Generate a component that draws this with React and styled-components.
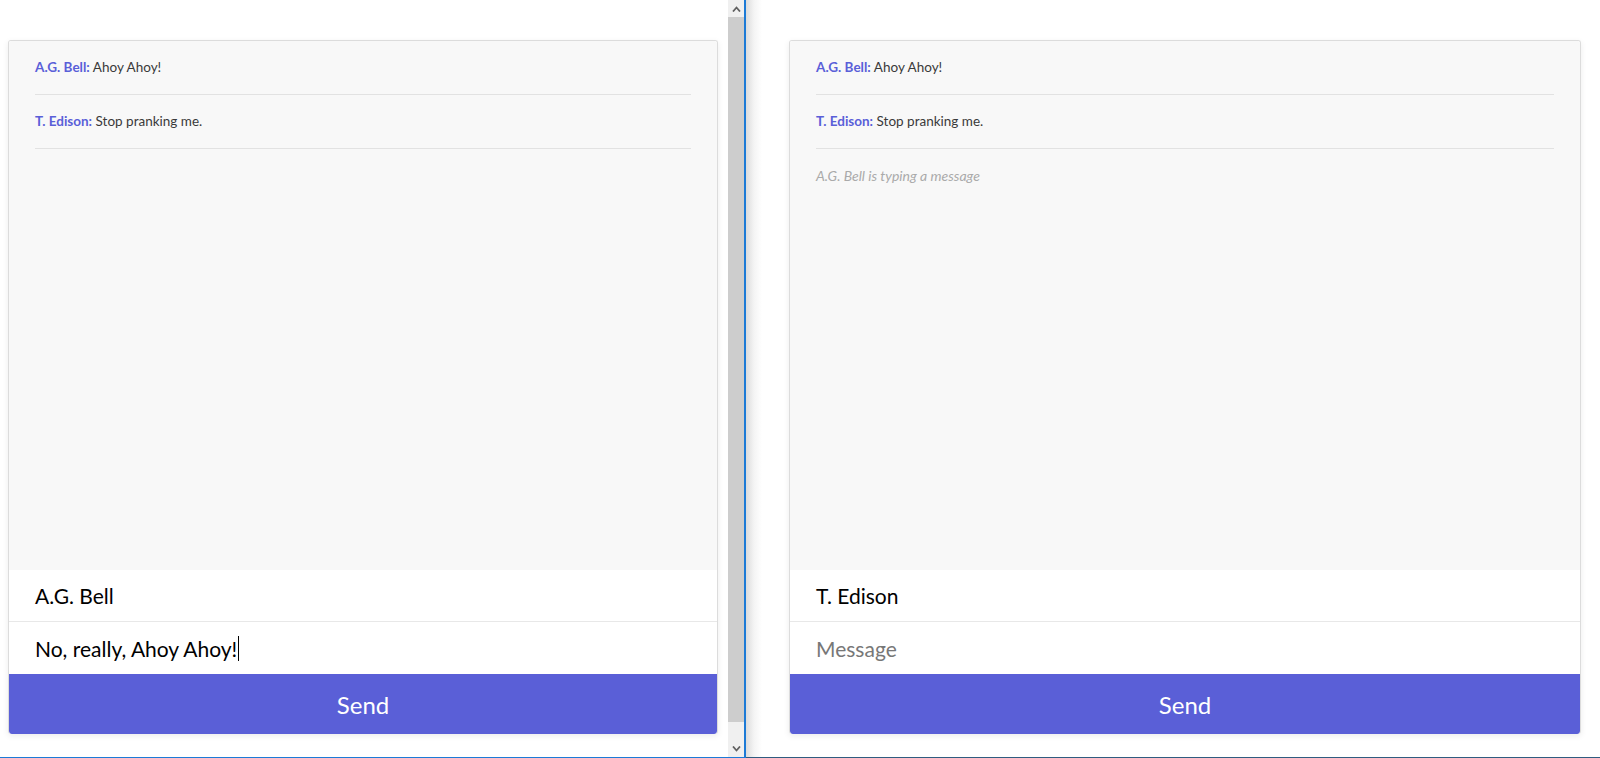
import React from 'react';
import styled, { createGlobalStyle } from 'styled-components';

const GlobalStyle = createGlobalStyle`
  html, body {
    margin: 0;
    padding: 0;
    background: #fff;
    overflow: hidden;
  }
  body {
    font-family: Lato, "Noto Sans", sans-serif;
  }
`;

const Screen = styled.div`
  display: flex;
  width: 1600px;
  height: 758px;
  overflow: hidden;
`;

const Window = styled.div`
  display: flex;
  height: 757px;
  border-bottom: 1px solid ${p => (p.active ? '#1c7ad6' : '#2f5c80')};
  border-right: ${p => (p.active ? '2px solid #1c7ad6' : 'none')};
  flex: ${p => (p.active ? '0 0 744px' : '1')};
  background: ${p => (p.active ? '#fff' : 'linear-gradient(to right, #dcdcdc 0, #f4f4f4 8px, #fff 16px)')};
`;

const Viewport = styled.div`
  flex: 1;
  display: flex;
  padding: ${p => p.pad};
`;

const Scrollbar = styled.div`
  width: 16px;
  display: flex;
  flex-direction: column;
  background: #f0f0f0;
`;

const ScrollArrow = styled.div`
  height: 17px;
  display: flex;
  align-items: center;
  justify-content: center;
  color: #606060;
`;

const ScrollThumb = styled.div`
  flex: 1;
  margin: 0 0 18px;
  background: #cdcdcd;
`;

const Card = styled.div`
  flex: 1;
  display: flex;
  flex-direction: column;
  height: 693px;
  border: 1px solid #dcdcdc;
  border-bottom: none;
  border-radius: 3px;
  box-shadow: 0 2px 6px rgba(0, 0, 0, 0.08);
  overflow: hidden;
`;

const MessageList = styled.div`
  flex: 1;
  background: #f8f8f8;
  padding: 0 26px;
`;

const MessageRow = styled.div`
  padding: 18px 0;
  font-size: 13.5px;
  line-height: 17px;
  color: #3a3a3a;
  border-bottom: 1px solid #e2e2e2;
`;

const Author = styled.strong`
  color: #5a5fd8;
  font-weight: 700;
`;

const Typing = styled.div`
  padding: 18px 0;
  font-size: 14px;
  line-height: 17px;
  font-style: italic;
  color: #aaa;
`;

const Field = styled.div`
  height: ${p => p.h}px;
  display: flex;
  align-items: center;
  padding: 0 26px;
  background: #fff;
  font-size: 21px;
  color: ${p => (p.placeholder ? '#777' : '#000')};
  border-bottom: ${p => (p.divider ? '1px solid #e8e8e8' : 'none')};
`;

const Caret = styled.span`
  display: inline-block;
  width: 1px;
  height: 25px;
  margin-left: 1px;
  background: #000;
`;

const SendButton = styled.button`
  height: 60px;
  border: none;
  margin: 0;
  background: #5a5fd7;
  color: #fff;
  font-family: Lato, "Noto Sans", sans-serif;
  font-size: 24px;
  border-radius: 0 0 3px 3px;
  cursor: pointer;
`;

const Chevron = ({ up }) => (
  <svg width="9" height="6" viewBox="0 0 9 6">
    <path
      d={up ? 'M1 5.5 L4.5 1.5 L8 5.5' : 'M1 0.5 L4.5 4.5 L8 0.5'}
      fill="none"
      stroke="#606060"
      strokeWidth="1.8"
    />
  </svg>
);

const messages = [
  { from: 'A.G. Bell', text: 'Ahoy Ahoy!' },
  { from: 'T. Edison', text: 'Stop pranking me.' }
];

const ChatCard = ({ name, draft, typing }) => (
  <Card>
    <MessageList>
      {messages.map((m, i) => (
        <MessageRow key={i}>
          <Author>{m.from}:</Author> {m.text}
        </MessageRow>
      ))}
      {typing && <Typing>{typing} is typing a message</Typing>}
    </MessageList>
    <Field h={51} divider>{name}</Field>
    <Field h={52} placeholder={!draft}>
      {draft || 'Message'}
      {draft && <Caret />}
    </Field>
    <SendButton>Send</SendButton>
  </Card>
);

export default function App() {
  return (
    <>
      <GlobalStyle />
      <Screen>
        <Window active>
          <Viewport pad="40px 10px 0 8px">
            <ChatCard name="A.G. Bell" draft="No, really, Ahoy Ahoy!" />
          </Viewport>
          <Scrollbar>
            <ScrollArrow><Chevron up /></ScrollArrow>
            <ScrollThumb />
            <ScrollArrow><Chevron /></ScrollArrow>
          </Scrollbar>
        </Window>
        <Window>
          <Viewport pad="40px 19px 0 43px">
            <ChatCard name="T. Edison" typing="A.G. Bell" />
          </Viewport>
        </Window>
      </Screen>
    </>
  );
}
